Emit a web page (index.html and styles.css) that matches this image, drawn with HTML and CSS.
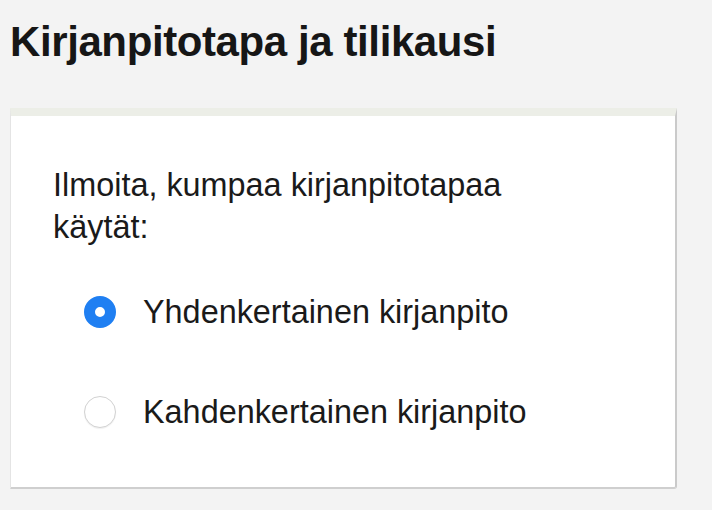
FILE: index.html
```html
<!DOCTYPE html>
<html lang="fi">
<head>
<meta charset="utf-8">
<link rel="stylesheet" href="styles.css">
</head>
<body>
<h1 class="title">Kirjanpitotapa ja tilikausi</h1>
<section class="card">
  <p class="question">Ilmoita, kumpaa kirjanpitotapaa käytät:</p>
  <div class="options">
    <label class="option">
      <span class="radio radio-checked"></span>
      <span class="label-text">Yhdenkertainen kirjanpito</span>
    </label>
    <label class="option">
      <span class="radio"></span>
      <span class="label-text">Kahdenkertainen kirjanpito</span>
    </label>
  </div>
</section>
</body>
</html>
```
FILE: styles.css
```css
html, body {
  margin: 0;
  padding: 0;
  background: #f3f3f3;
}
body {
  font-family: "Liberation Sans", Arial, sans-serif;
  color: #1a1a1a;
  padding: 0 10px;
  width: 667px;
}
.title {
  margin: 0;
  padding-top: 20px;
  font-size: 42px;
  line-height: 44px;
  font-weight: bold;
  color: #161616;
  letter-spacing: -0.4px;
}
.card {
  margin-top: 44px;
  background: #fff;
  border-top: 8px solid #eceee7;
  border-left: 1px solid #e4e4e4;
  border-right: 2px solid #cacaca;
  border-bottom: 2px solid #cfcfcf;
  border-bottom-right-radius: 3px;
  padding: 48px 40px 50px 42px;
}
.question {
  margin: 0;
  font-size: 32.4px;
  line-height: 42px;
  max-width: 530px;
}
.options {
  margin-top: 39px;
  display: flex;
  flex-direction: column;
  gap: 50px;
  padding-left: 31px;
}
.option {
  display: flex;
  align-items: center;
  height: 50px;
  gap: 27px;
  font-size: 32.4px;
}
.radio {
  width: 32px;
  height: 32px;
  border-radius: 50%;
  box-sizing: border-box;
  border: 1px solid #d2d2d2;
  background: #fff;
  box-shadow: 0 1px 1px rgba(0,0,0,0.06);
  flex: none;
}
.radio-checked {
  border: 11px solid #1f7ff2;
  box-shadow: none;
}
```
